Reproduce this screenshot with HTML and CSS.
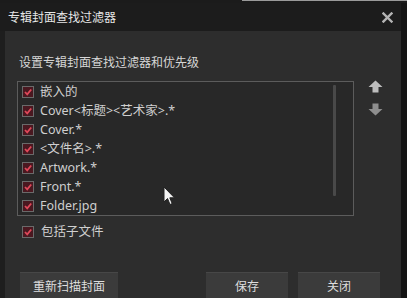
FILE: index.html
```html
<!DOCTYPE html>
<html lang="zh">
<head>
<meta charset="utf-8">
<link rel="stylesheet" href="styles.css">
</head>
<body>
<div class="screen">
  <div class="topstrip"><span class="topline"></span></div>
  <div class="window">
    <div class="titlebar">
      <span class="title">专辑封面查找过滤器</span>
      <svg class="close" width="11" height="11" viewBox="0 0 11 11"><path d="M1.5 1.5 L9.5 9.5 M9.5 1.5 L1.5 9.5" stroke="#b4b4b4" stroke-width="2.4" stroke-linecap="square"/></svg>
    </div>
    <div class="content">
      <div class="label">设置专辑封面查找过滤器和优先级</div>
      <div class="listrow">
        <div class="list">
          <div class="items">
            <div class="item"><span class="cb"><svg width="10" height="10" viewBox="0 0 10 10"><path d="M2 5 L4.2 7.3 L8.2 2.5" fill="none" stroke="#e0485a" stroke-width="1.8"/></svg></span><span>嵌入的</span></div>
            <div class="item"><span class="cb"><svg width="10" height="10" viewBox="0 0 10 10"><path d="M2 5 L4.2 7.3 L8.2 2.5" fill="none" stroke="#e0485a" stroke-width="1.8"/></svg></span><span>Cover&lt;标题&gt;&lt;艺术家&gt;.*</span></div>
            <div class="item"><span class="cb"><svg width="10" height="10" viewBox="0 0 10 10"><path d="M2 5 L4.2 7.3 L8.2 2.5" fill="none" stroke="#e0485a" stroke-width="1.8"/></svg></span><span>Cover.*</span></div>
            <div class="item"><span class="cb"><svg width="10" height="10" viewBox="0 0 10 10"><path d="M2 5 L4.2 7.3 L8.2 2.5" fill="none" stroke="#e0485a" stroke-width="1.8"/></svg></span><span>&lt;文件名&gt;.*</span></div>
            <div class="item"><span class="cb"><svg width="10" height="10" viewBox="0 0 10 10"><path d="M2 5 L4.2 7.3 L8.2 2.5" fill="none" stroke="#e0485a" stroke-width="1.8"/></svg></span><span>Artwork.*</span></div>
            <div class="item"><span class="cb"><svg width="10" height="10" viewBox="0 0 10 10"><path d="M2 5 L4.2 7.3 L8.2 2.5" fill="none" stroke="#e0485a" stroke-width="1.8"/></svg></span><span>Front.*</span></div>
            <div class="item"><span class="cb"><svg width="10" height="10" viewBox="0 0 10 10"><path d="M2 5 L4.2 7.3 L8.2 2.5" fill="none" stroke="#e0485a" stroke-width="1.8"/></svg></span><span>Folder.jpg</span></div>
          </div>
          <div class="scrollbar"><div class="thumb"></div></div>
        </div>
        <div class="arrows">
          <svg class="arrow" width="15" height="13" viewBox="0 0 15 13"><path d="M7.5 0.5 L14.5 7 L10.5 7 L10.5 12.5 L4.5 12.5 L4.5 7 L0.5 7 Z" fill="#bdbdbd"/></svg>
          <svg class="arrow" width="15" height="13" viewBox="0 0 15 13"><path d="M4.5 0.5 L10.5 0.5 L10.5 6 L14.5 6 L7.5 12.5 L0.5 6 L4.5 6 Z" fill="#8e8e8e"/></svg>
        </div>
      </div>
      <div class="item sub"><span class="cb"><svg width="10" height="10" viewBox="0 0 10 10"><path d="M2 5 L4.2 7.3 L8.2 2.5" fill="none" stroke="#e0485a" stroke-width="1.8"/></svg></span><span>包括子文件</span></div>
      <div class="buttons">
        <div class="btn rescan">重新扫描封面</div>
        <div class="spacer"></div>
        <div class="btn">保存</div>
        <div class="btn">关闭</div>
      </div>
    </div>
  </div>
  <svg class="cursor" width="13" height="20" viewBox="0 0 13 20"><path d="M1 1 L1 16 L4.5 12.5 L7 18.5 L9.2 17.6 L6.8 11.8 L11.5 11.8 Z" fill="#f4f4f4" stroke="#222" stroke-width="1"/></svg>
</div>
</body>
</html>
```
FILE: styles.css
```css
* { box-sizing: border-box; }
html, body { margin: 0; padding: 0; }
body {
  background: #161616;
  font-family: "Noto Sans", "Noto Sans CJK SC", sans-serif;
  font-size: 12px;
  color: #d2d2d2;
}
.screen {
  position: relative;
  width: 407px;
  height: 298px;
  overflow: hidden;
  background: #141414;
}
.topstrip {
  height: 3px;
  background: #1b1b1b;
  position: relative;
}
.topline {
  position: absolute;
  left: 242px;
  right: 0;
  top: 0;
  height: 1px;
  background: #9a9a9a;
}
.window {
  width: 401px;
  height: 295px;
  background: #1e1e1e;
  display: flex;
  flex-direction: column;
}
.titlebar {
  height: 28px;
  display: flex;
  align-items: center;
  padding: 0 8px 0 8px;
  background: #1c1c1c;
}
.title {
  flex: 1;
  font-family: "Noto Sans CJK SC", sans-serif;
  font-size: 12px;
  color: #e6e6e6;
  line-height: 16px;
}
.close { display: block; }
.content {
  flex: 1;
  margin-left: 5px;
  background: #2d2d2d;
  padding: 23px 0 0 0;
  display: flex;
  flex-direction: column;
}
.label {
  padding-left: 14px;
  line-height: 16px;
  height: 16px;
  font-family: "Noto Sans CJK SC", sans-serif;
  color: #d6d6d6;
}
.listrow {
  margin-top: 11px;
  margin-left: 12px;
  display: flex;
  align-items: flex-start;
}
.list {
  width: 337px;
  height: 135px;
  border: 1px solid #5c5c5c;
  background: #282828;
  display: flex;
}
.items {
  flex: 1;
  padding-left: 4px;
}
.item {
  height: 19px;
  display: flex;
  align-items: center;
  gap: 6px;
  line-height: 16px;
  font-size: 12.5px;
  color: #cfcfcf;
  white-space: nowrap;
}
.cb {
  width: 12px;
  height: 12px;
  border: 1px solid #6a6a6a;
  background: #4a1820;
  display: flex;
  align-items: center;
  justify-content: center;
  flex: none;
}
.cb svg { display: block; }
.scrollbar {
  width: 12px;
  padding: 3px 0 19px 0;
  display: flex;
  justify-content: flex-start;
  margin-right: 8px;
}
.thumb {
  width: 3px;
  background: #494949;
  border-radius: 1px;
}
.arrows {
  margin-left: 14px;
  margin-top: -1px;
  display: flex;
  flex-direction: column;
  gap: 10px;
}
.arrow { display: block; filter: blur(0.4px); }
.sub {
  margin-top: 6px;
  margin-left: 17px;
  gap: 7px;
}
.buttons {
  margin-top: 31px;
  display: flex;
  padding-left: 15px;
  padding-right: 21px;
  gap: 10px;
}
.btn {
  height: 26px;
  width: 82px;
  background: #3b3b3b;
  border-top: 1px solid #474747;
  display: flex;
  align-items: center;
  justify-content: center;
  font-family: "Noto Sans CJK SC", sans-serif;
  font-size: 12px;
  color: #dedede;
}
.btn.rescan { width: 98px; }
.spacer { flex: 1; }
.cursor {
  position: absolute;
  left: 163px;
  top: 186px;
}
```
